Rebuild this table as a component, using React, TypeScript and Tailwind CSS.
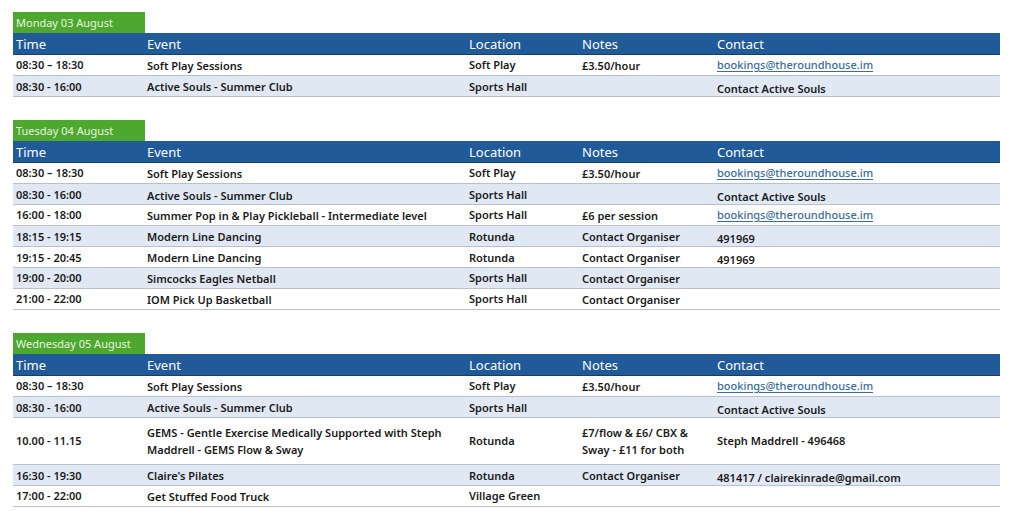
import React from 'react';

type Row = {
  time: string;
  event: React.ReactNode;
  location: string;
  notes?: React.ReactNode;
  contact?: string;
  link?: boolean;
  low?: boolean;
  darkLine?: boolean;
  tall?: boolean;
};

type Day = {
  title: string;
  rows: Row[];
};

const EMAIL = 'bookings@theroundhouse.im';

const days: Day[] = [
  {
    title: 'Monday 03 August',
    rows: [
      { time: '08:30 – 18:30', event: 'Soft Play Sessions', location: 'Soft Play', notes: '£3.50/hour', contact: EMAIL, link: true },
      { time: '08:30 - 16:00', event: 'Active Souls - Summer Club', location: 'Sports Hall', contact: 'Contact Active Souls', low: true },
    ],
  },
  {
    title: 'Tuesday 04 August',
    rows: [
      { time: '08:30 – 18:30', event: 'Soft Play Sessions', location: 'Soft Play', notes: '£3.50/hour', contact: EMAIL, link: true },
      { time: '08:30 - 16:00', event: 'Active Souls - Summer Club', location: 'Sports Hall', contact: 'Contact Active Souls', low: true, darkLine: true },
      { time: '16:00 - 18:00', event: 'Summer Pop in & Play Pickleball - Intermediate level', location: 'Sports Hall', notes: '£6 per session', contact: EMAIL, link: true },
      { time: '18:15 - 19:15', event: 'Modern Line Dancing', location: 'Rotunda', notes: 'Contact Organiser', contact: '491969', low: true },
      { time: '19:15 - 20:45', event: 'Modern Line Dancing', location: 'Rotunda', notes: 'Contact Organiser', contact: '491969', low: true },
      { time: '19:00 - 20:00', event: 'Simcocks Eagles Netball', location: 'Sports Hall', notes: 'Contact Organiser' },
      { time: '21:00 - 22:00', event: 'IOM Pick Up Basketball', location: 'Sports Hall', notes: 'Contact Organiser' },
    ],
  },
  {
    title: 'Wednesday 05 August',
    rows: [
      { time: '08:30 – 18:30', event: 'Soft Play Sessions', location: 'Soft Play', notes: '£3.50/hour', contact: EMAIL, link: true },
      { time: '08:30 - 16:00', event: 'Active Souls - Summer Club', location: 'Sports Hall', contact: 'Contact Active Souls', low: true },
      {
        time: '10.00 - 11.15',
        event: (
          <>
            GEMS - Gentle Exercise Medically Supported with Steph
            <br />
            Maddrell - GEMS Flow &amp; Sway
          </>
        ),
        location: 'Rotunda',
        notes: (
          <>
            £7/flow &amp; £6/ CBX &amp;
            <br />
            Sway - £11 for both
          </>
        ),
        contact: 'Steph Maddrell - 496468',
        tall: true,
      },
      { time: '16:30 - 19:30', event: "Claire's Pilates", location: 'Rotunda', notes: 'Contact Organiser', contact: '481417 / clairekinrade@gmail.com', low: true },
      { time: '17:00 - 22:00', event: 'Get Stuffed Food Truck', location: 'Village Green' },
    ],
  },
];

const cols = 'w-[987px] grid grid-cols-[131px_322px_113px_135px_286px]';

function DayTable({ day }: { day: Day }) {
  return (
    <div className="flex flex-col">
      <div className="w-[132px] h-[21px] bg-[#4ea72e] text-[#e8f5e0] text-[11px] leading-[21px] pl-[3px]">
        {day.title}
      </div>
      <div className={`${cols} h-[22px] bg-[#215a98] text-white text-[13px] leading-[22px] border-b border-[#163e6b]`}>
        <div className="pl-[3px]">Time</div>
        <div className="pl-[3px]">Event</div>
        <div className="pl-[3px]">Location</div>
        <div className="pl-[3px]">Notes</div>
        <div className="pl-[3px]">Contact</div>
      </div>
      {day.rows.map((r, i) => (
        <div
          key={i}
          className={`${cols} ${r.tall ? 'h-[47px]' : 'h-[21px]'} ${i % 2 === 1 ? 'bg-[#dfe8f3]' : 'bg-white'} border-b border-[#b9c2cc] text-[11px] font-semibold text-[#1a1a1a] items-center`}
        >
          <div className="pl-[3px]">{r.time}</div>
          <div className="pl-[3px] leading-[17px]">{r.event}</div>
          <div className="pl-[3px]">{r.location}</div>
          <div className="pl-[3px] leading-[17px]">{r.notes}</div>
          <div className={`pl-[3px] h-full flex items-center ${r.low ? 'pt-[5px]' : ''} ${r.darkLine ? 'border-b border-[#222]' : ''}`}>
            {r.link ? (
              <span className="text-[#3a6d9c] underline underline-offset-2 font-medium">{r.contact}</span>
            ) : (
              <span>{r.contact}</span>
            )}
          </div>
        </div>
      ))}
    </div>
  );
}

export default function App() {
  return (
    <div className="w-[1024px] h-[511px] bg-white pl-[13px] pt-[12px] flex flex-col gap-[23px] overflow-hidden" style={{ fontFamily: '"Noto Sans", "Open Sans", sans-serif' }}>
      {days.map((d) => (
        <DayTable key={d.title} day={d} />
      ))}
    </div>
  );
}
